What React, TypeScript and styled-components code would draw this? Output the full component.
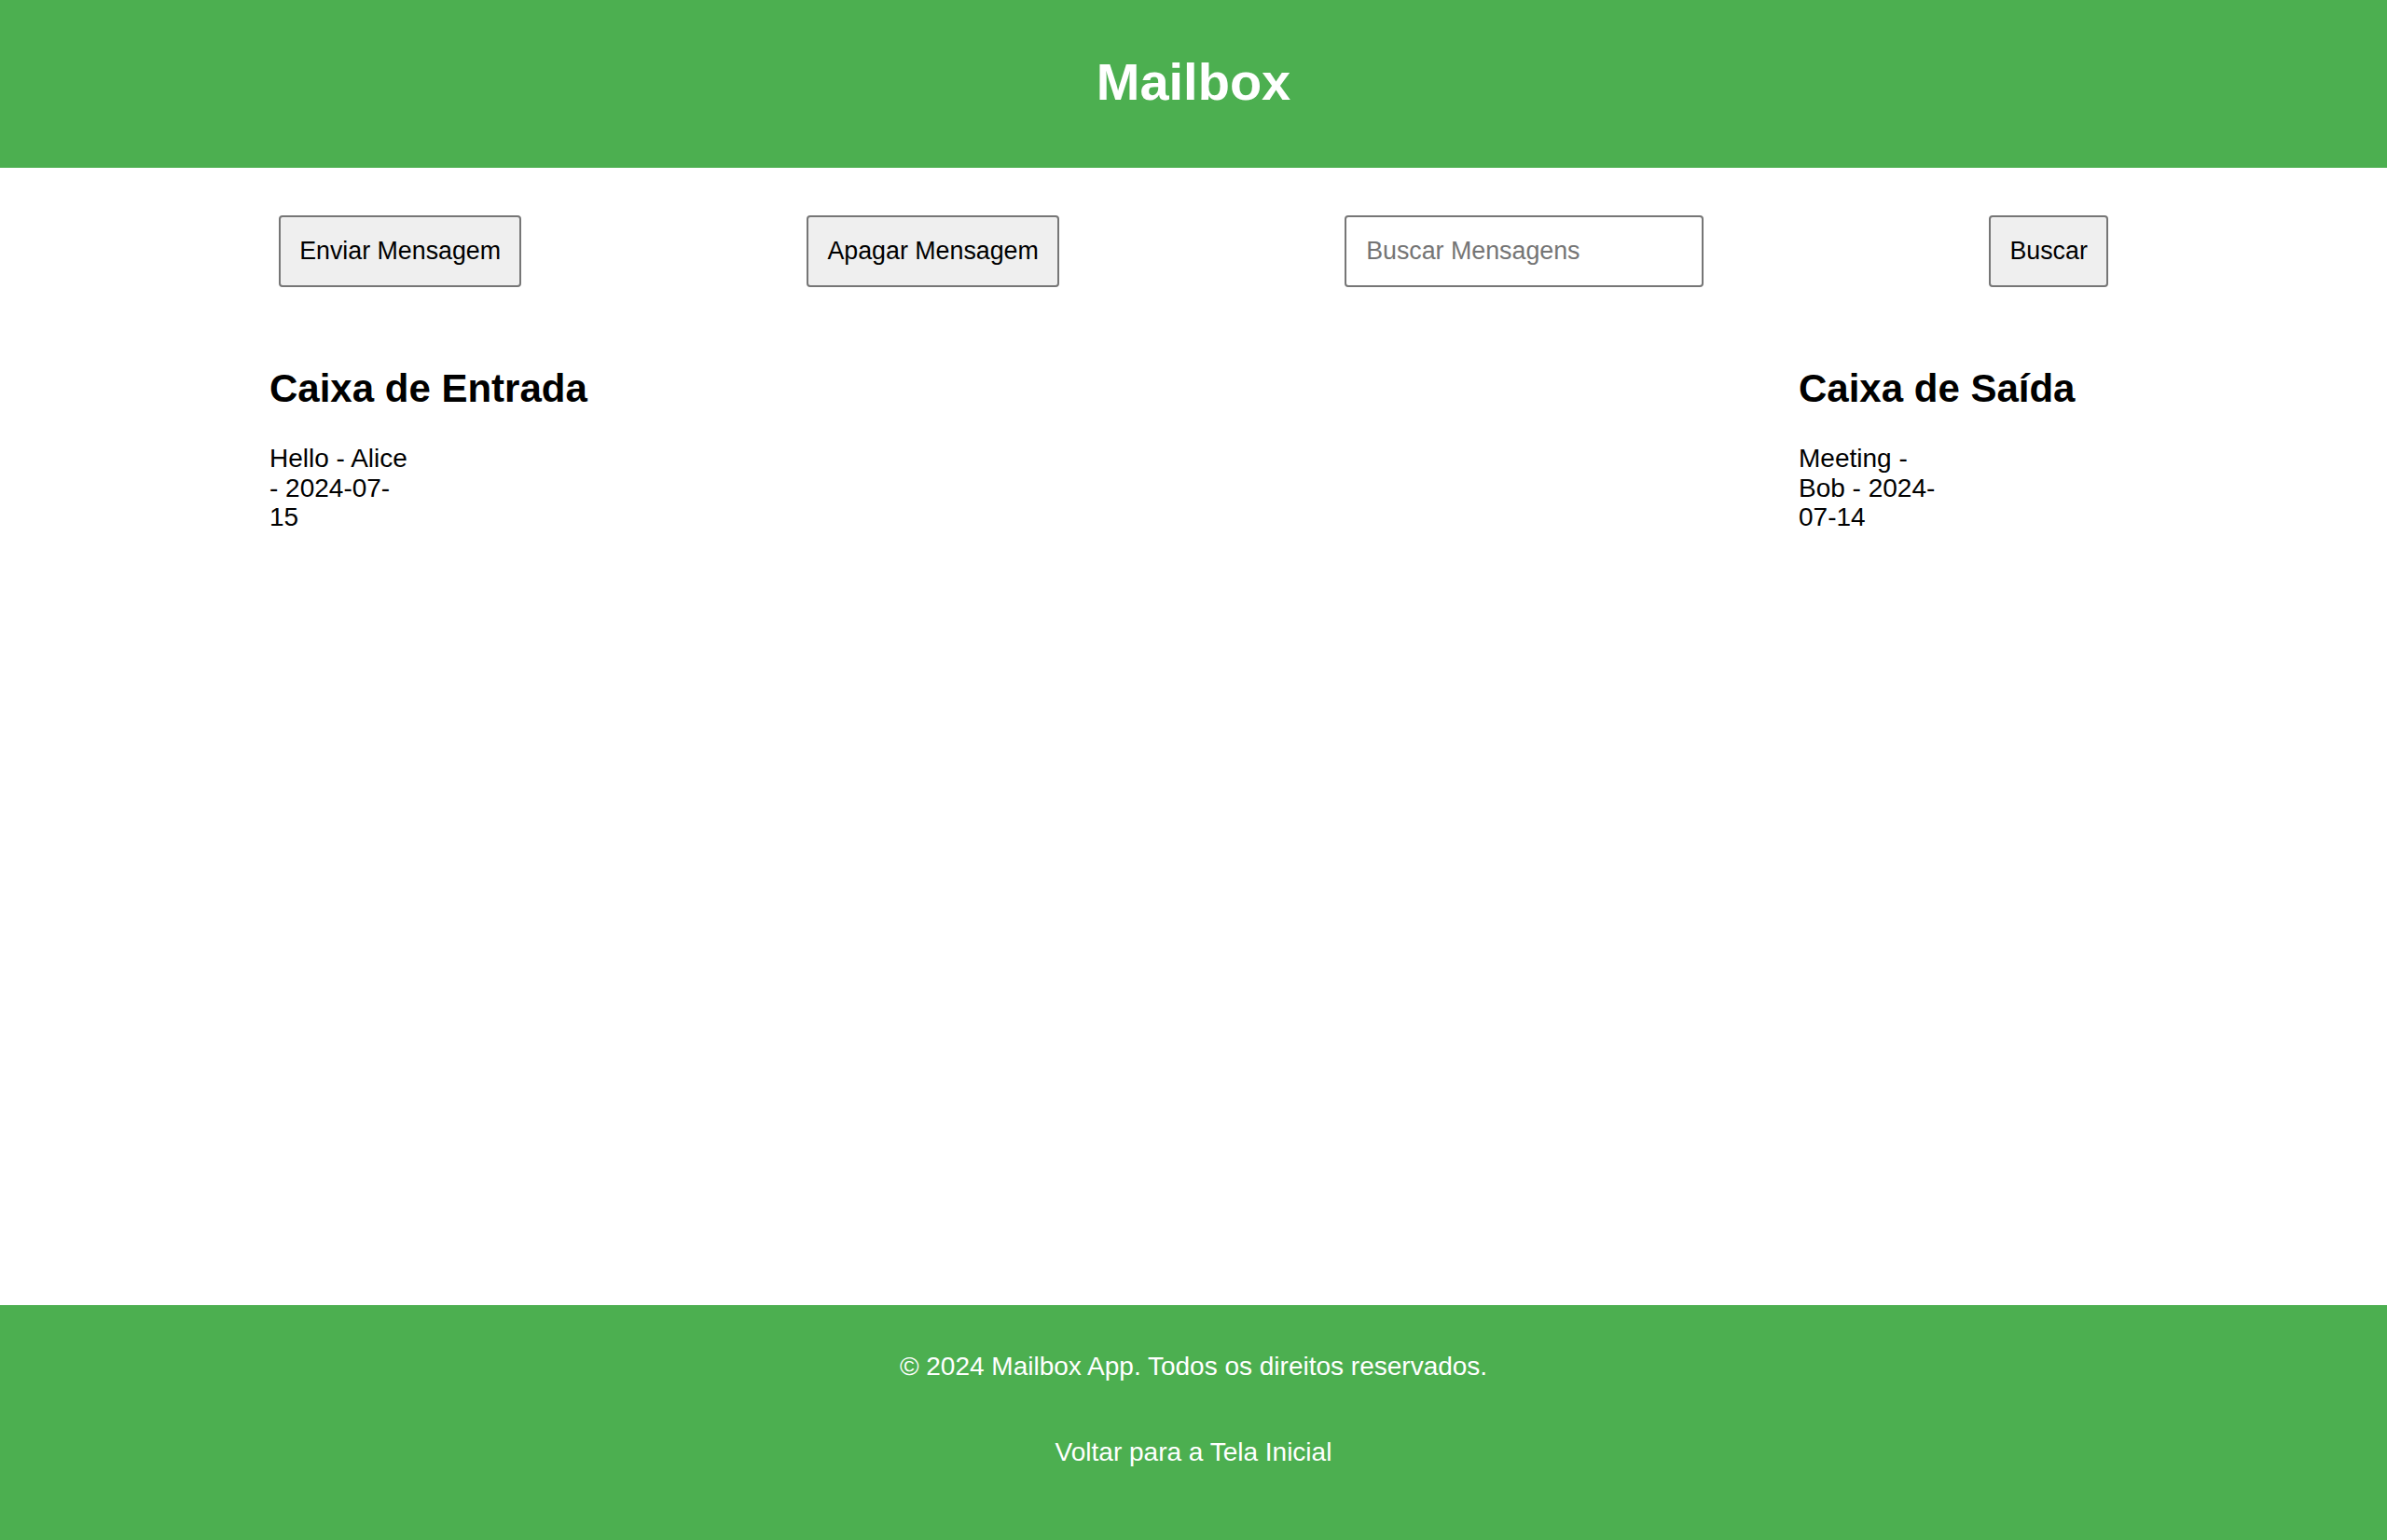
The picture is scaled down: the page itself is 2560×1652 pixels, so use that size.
import React from "react";
import styled, { createGlobalStyle } from "styled-components";

const GlobalStyle = createGlobalStyle`
  html, body {
    margin: 0;
    padding: 0;
    background: #ffffff;
  }
  body {
    font-family: "Liberation Sans", Arial, sans-serif;
    font-size: 28px;
    color: #000000;
  }
  * { box-sizing: border-box; }
`;

const Page = styled.div`
  min-height: 100vh;
  display: flex;
  flex-direction: column;
`;

const Header = styled.header`
  background: #4caf50;
  color: #ffffff;
  height: 180px;
  padding: 56px 0 0;
  text-align: center;
`;

const Title = styled.h1`
  margin: 0;
  font-size: 56px;
  line-height: 64px;
  font-weight: 700;
`;

const Main = styled.main`
  flex: 1;
  display: flex;
  flex-direction: column;
`;

const Toolbar = styled.div`
  display: flex;
  justify-content: space-around;
  align-items: center;
  padding: 0 146px;
  margin-top: 51px;
`;

const Button = styled.button`
  font-family: "Liberation Sans", Arial, sans-serif;
  font-size: 26.8px;
  line-height: 31px;
  color: #000000;
  background: #efefef;
  border: 2px solid #767676;
  border-radius: 4px;
  height: 77px;
  padding: 0 20px;
  cursor: pointer;
`;

const SearchInput = styled.input`
  font-family: "Liberation Sans", Arial, sans-serif;
  font-size: 26.8px;
  color: #000000;
  background: #ffffff;
  border: 2px solid #767676;
  border-radius: 4px;
  width: 385px;
  height: 77px;
  padding: 0 21px;
  &::placeholder {
    color: #757575;
  }
`;

const Boxes = styled.div`
  display: flex;
  justify-content: space-between;
  padding: 0 472px 0 289px;
  margin-top: 85px;
`;

const Box = styled.section`
  width: 159px;
`;

const BoxTitle = styled.h2`
  margin: 0;
  font-size: 42px;
  line-height: 48px;
  font-weight: 700;
  white-space: nowrap;
`;

const MessageList = styled.ul`
  list-style: none;
  margin: 35px 0 0;
  padding: 0;
`;

const MessageItem = styled.li`
  font-size: 28px;
  line-height: 31.7px;
`;

const Footer = styled.footer`
  background: #4caf50;
  color: #ffffff;
  height: 252px;
  display: flex;
  flex-direction: column;
  align-items: center;
  padding-top: 50px;
  gap: 60px;
`;

const FooterText = styled.p`
  margin: 0;
  font-size: 28px;
  line-height: 31.7px;
`;

const FooterLink = styled.a`
  color: #ffffff;
  text-decoration: none;
  font-size: 28px;
  line-height: 31.7px;
`;

const inbox = [{ subject: "Hello", who: "Alice", date: "2024-07-15" }];
const outbox = [{ subject: "Meeting", who: "Bob", date: "2024-07-14" }];

export default function App() {
  return (
    <Page>
      <GlobalStyle />
      <Header>
        <Title>Mailbox</Title>
      </Header>
      <Main>
        <Toolbar>
          <Button>Enviar Mensagem</Button>
          <Button>Apagar Mensagem</Button>
          <SearchInput placeholder="Buscar Mensagens" />
          <Button>Buscar</Button>
        </Toolbar>
        <Boxes>
          <Box>
            <BoxTitle>Caixa de Entrada</BoxTitle>
            <MessageList>
              {inbox.map((m) => (
                <MessageItem key={m.subject}>
                  {m.subject} - {m.who} - {m.date}
                </MessageItem>
              ))}
            </MessageList>
          </Box>
          <Box>
            <BoxTitle>Caixa de Saída</BoxTitle>
            <MessageList>
              {outbox.map((m) => (
                <MessageItem key={m.subject}>
                  {m.subject} - {m.who} - {m.date}
                </MessageItem>
              ))}
            </MessageList>
          </Box>
        </Boxes>
      </Main>
      <Footer>
        <FooterText>© 2024 Mailbox App. Todos os direitos reservados.</FooterText>
        <FooterLink href="#">Voltar para a Tela Inicial</FooterLink>
      </Footer>
    </Page>
  );
}
